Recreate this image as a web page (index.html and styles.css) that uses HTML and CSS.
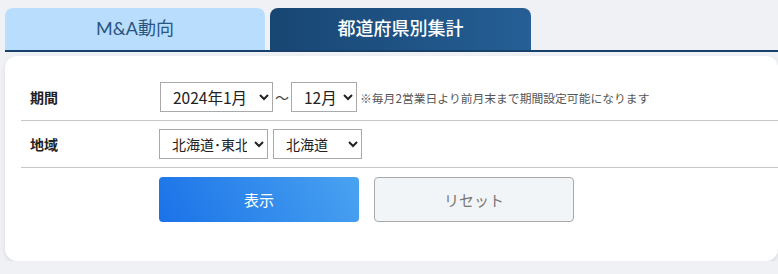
FILE: index.html
```html
<!DOCTYPE html>
<html lang="ja">
<head>
    <meta charset="UTF-8">
    <title>都道府県別集計</title>
    <link rel="stylesheet" href="styles.css">
</head>
<body>
    <div class="tabs">
        <div class="tab">M&amp;A動向</div>
        <div class="tab active">都道府県別集計</div>
    </div>

    <div class="card">
        <div class="form-row">
            <div class="label">期間</div>
            <div class="controls">
                <select class="sel sel-from">
                    <option>2024年1月</option>
                </select>
                <span class="tilde">～</span>
                <select class="sel sel-to">
                    <option>12月</option>
                </select>
                <span class="note">※毎月2営業日より前月末まで期間設定可能になります</span>
            </div>
        </div>
        <div class="form-row">
            <div class="label">地域</div>
            <div class="controls">
                <select class="sel sel-area">
                    <option>北海道･東北</option>
                </select>
                <select class="sel sel-pref">
                    <option>北海道</option>
                </select>
            </div>
        </div>
        <div class="buttons">
            <button class="button primary">表示</button>
            <button class="button reset">リセット</button>
        </div>
    </div>
</body>
</html>
```

FILE: styles.css
```css
body {
    margin: 0;
    padding: 8px 0 0 5px;
    background: #f0f1f5;
    font-family: Lato, "Noto Sans CJK JP", sans-serif;
    color: #222;
}
.tabs {
    display: flex;
    gap: 5px;
    border-bottom: 2px solid #17406b;
}
.tab {
    width: 260px;
    height: 42px;
    line-height: 40px;
    text-align: center;
    font-size: 18px;
    color: #2a5580;
    background: #b9ddfc;
    border-radius: 8px 8px 0 0;
}
.tab.active {
    width: 261px;
    color: #fff;
    font-weight: 500;
    background: linear-gradient(90deg, #184673, #255f95);
}
.card {
    margin-top: 4px;
    background: #fff;
    border-radius: 12px;
    box-shadow: 0 2px 4px rgba(0,0,0,0.1);
    padding: 16px 0 39px 16px;
    height: 150px;
}
.form-row {
    display: grid;
    grid-template-columns: 138px 1fr;
    align-items: center;
    border-bottom: 1px solid #c8c8c8;
    padding: 8px 0;
}
.form-row:first-child {
    padding-top: 10px;
}
.label {
    padding-left: 9px;
    font-size: 14px;
    font-weight: 700;
    color: #222;
}
.controls {
    display: flex;
    align-items: center;
}
.sel {
    height: 30px;
    border: 1px solid #a9a9a9;
    border-radius: 0;
    background: #fff;
    font-family: "Noto Sans CJK JP", sans-serif;
    font-size: 15.5px;
    color: #222;
    padding: 0 4px 0 8px;
}
.sel-from {
    width: 113px;
    margin-left: 1px;
}
.sel-to {
    width: 66px;
}
.sel-area {
    width: 109px;
    font-size: 14px;
}
.sel-pref {
    width: 89px;
    margin-left: 5px;
    font-size: 14px;
}
.tilde {
    width: 18px;
    text-align: center;
    font-family: "Noto Sans CJK JP", sans-serif;
    font-size: 14px;
    color: #444;
}
.note {
    margin-left: 3px;
    font-family: "Noto Sans CJK JP", sans-serif;
    font-size: 11.8px;
    color: #555;
}
.buttons {
    display: flex;
    gap: 15px;
    padding: 9px 0 0 138px;
}
.button {
    width: 200px;
    height: 45px;
    border-radius: 4px;
    font-family: "Noto Sans CJK JP", sans-serif;
    font-size: 15px;
}
.primary {
    border: none;
    color: #fff;
    background: linear-gradient(60deg, #1a72e8, #4aa3f0);
}
.reset {
    border: 1px solid #a9a9a9;
    color: #777;
    background: #f2f5f8;
}
```
